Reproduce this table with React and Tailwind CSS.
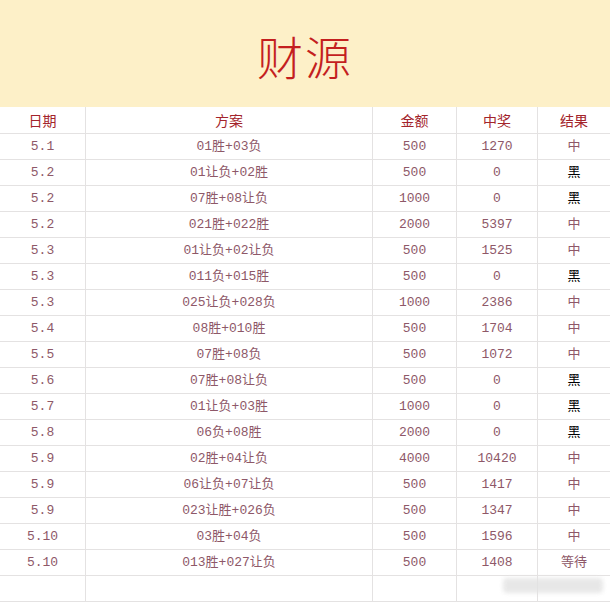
const rows = [
  ['5.1', '01胜+03负', '500', '1270', '中'],
  ['5.2', '01让负+02胜', '500', '0', '黑'],
  ['5.2', '07胜+08让负', '1000', '0', '黑'],
  ['5.2', '021胜+022胜', '2000', '5397', '中'],
  ['5.3', '01让负+02让负', '500', '1525', '中'],
  ['5.3', '011负+015胜', '500', '0', '黑'],
  ['5.3', '025让负+028负', '1000', '2386', '中'],
  ['5.4', '08胜+010胜', '500', '1704', '中'],
  ['5.5', '07胜+08负', '500', '1072', '中'],
  ['5.6', '07胜+08让负', '500', '0', '黑'],
  ['5.7', '01让负+03胜', '1000', '0', '黑'],
  ['5.8', '06负+08胜', '2000', '0', '黑'],
  ['5.9', '02胜+04让负', '4000', '10420', '中'],
  ['5.9', '06让负+07让负', '500', '1417', '中'],
  ['5.9', '023让胜+026负', '500', '1347', '中'],
  ['5.10', '03胜+04负', '500', '1596', '中'],
  ['5.10', '013胜+027让负', '500', '1408', '等待'],
  ['', '', '', '', ''],
]

const headers = ['日期', '方案', '金额', '中奖', '结果']

const mono = "font-['Liberation_Mono','Noto_Sans_CJK_SC',monospace]"
const cols = 'grid grid-cols-[86px_287px_84px_81px_1fr]'

function Cell({ children, last, className = '' }) {
  return (
    <div
      className={`flex items-center justify-center ${last ? '' : 'border-r border-[#e4e2e2]'} ${className}`}
    >
      {children}
    </div>
  )
}

export default function App() {
  return (
    <div className="w-[610px] h-[604px] bg-white overflow-hidden relative">
      <div className="h-[107px] bg-[#fdf0c8] flex items-center justify-center">
        <h1 className="text-[46px] leading-none font-light text-[#c41f1f] tracking-[2px] font-['Noto_Sans_CJK_SC',serif] mt-[2px]">
          财源
        </h1>
      </div>

      <div className={`${cols} h-[27px] border-b border-[#e4e2e2] text-[14px] text-[#a3242b] font-['Noto_Sans_CJK_SC',sans-serif]`}>
        {headers.map((h, i) => (
          <Cell key={h} last={i === headers.length - 1}>{h}</Cell>
        ))}
      </div>

      {rows.map((r, idx) => (
        <div
          key={idx}
          className={`${cols} h-[26px] border-b border-[#e4e2e2] text-[13px] text-[#8e5868] ${mono}`}
        >
          <Cell>{r[0]}</Cell>
          <Cell>{r[1]}</Cell>
          <Cell>{r[2]}</Cell>
          <Cell>{r[3]}</Cell>
          <Cell last className={r[4] === '黑' ? 'text-black' : ''}>{r[4]}</Cell>
        </div>
      ))}

      {/* faint watermark */}
      <div className="absolute left-[503px] top-[578px] w-[100px] h-[15px] rounded-sm bg-[#e2e2e2] blur-[2px] opacity-80" />
    </div>
  )
}
